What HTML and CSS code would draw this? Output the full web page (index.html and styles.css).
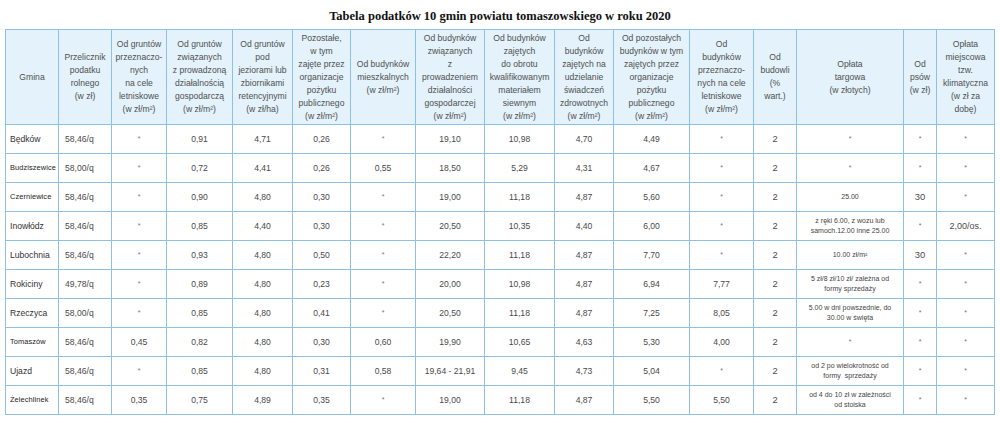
FILE: index.html
```html
<!DOCTYPE html>
<html lang="pl">
<head>
<meta charset="utf-8">
<title>Tabela podatków</title>
<link rel="stylesheet" href="styles.css">
</head>
<body>
<h1 class="title">Tabela podatków 10 gmin powiatu tomaszowskiego w roku 2020</h1>
<table class="tax">
<colgroup>
<col style="width:53px"><col style="width:53px"><col style="width:55px"><col style="width:66px"><col style="width:60px"><col style="width:58px"><col style="width:65px"><col style="width:69px"><col style="width:70px"><col style="width:59px"><col style="width:76px"><col style="width:64px"><col style="width:43px"><col style="width:107px"><col style="width:33px"><col style="width:58px">
</colgroup>
<thead>
<tr>
<th>Gmina</th>
<th>Przelicznik<br>podatku<br>rolnego<br>(w zł)</th>
<th>Od gruntów<br>przeznaczo-<br>nych<br>na cele<br>letniskowe<br>(w zł/m²)</th>
<th>Od gruntów<br>związanych<br>z prowadzoną<br>działalnością<br>gospodarczą<br>(w zł/m²)</th>
<th>Od gruntów<br>pod<br>jeziorami lub<br>zbiornikami<br>retencyjnymi<br>(w zł/ha)</th>
<th>Pozostałe,<br>w tym<br>zajęte przez<br>organizacje<br>pożytku<br>publicznego<br>(w zł/m²)</th>
<th>Od budynków<br>mieszkalnych<br>(w zł/m²)</th>
<th>Od budynków<br>związanych<br>z<br>prowadzeniem<br>działalności<br>gospodarczej<br>(w zł/m²)</th>
<th>Od budynków<br>zajętych<br>do obrotu<br>kwalifikowanym<br>materiałem<br>siewnym<br>(w zł/m²)</th>
<th>Od<br>budynków<br>zajętych na<br>udzielanie<br>świadczeń<br>zdrowotnych<br>(w zł/m²)</th>
<th>Od pozostałych<br>budynków w tym<br>zajętych przez<br>organizacje<br>pożytku<br>publicznego<br>(w zł/m²)</th>
<th>Od<br>budynków<br>przeznaczo-<br>nych na cele<br>letniskowe<br>(w zł/m²)</th>
<th>Od<br>budowli<br>(%<br>wart.)</th>
<th>Opłata<br>targowa<br>(w złotych)</th>
<th>Od<br>psów<br>(w zł)</th>
<th>Opłata<br>miejscowa<br>tzw.<br>klimatyczna<br>(w zł za<br>dobę)</th>
</tr>
</thead>
<tbody>
<tr><td class="name">Będków</td><td class="conv">58,46/q</td><td class="star">*</td><td>0,91</td><td>4,71</td><td>0,26</td><td class="star">*</td><td>19,10</td><td>10,98</td><td>4,70</td><td>4,49</td><td class="star">*</td><td class="big">2</td><td class="star">*</td><td class="star">*</td><td class="star">*</td></tr>
<tr><td class="name small">Budziszewice</td><td class="conv">58,00/q</td><td class="star">*</td><td>0,72</td><td>4,41</td><td>0,26</td><td>0,55</td><td>18,50</td><td>5,29</td><td>4,31</td><td>4,67</td><td class="star">*</td><td class="big">2</td><td class="star">*</td><td class="star">*</td><td class="star">*</td></tr>
<tr><td class="name small">Czerniewice</td><td class="conv">58,46/q</td><td class="star">*</td><td>0,90</td><td>4,80</td><td>0,30</td><td class="star">*</td><td>19,00</td><td>11,18</td><td>4,87</td><td>5,60</td><td class="star">*</td><td class="big">2</td><td class="note">25.00</td><td class="big">30</td><td class="star">*</td></tr>
<tr><td class="name">Inowłódz</td><td class="conv">58,46/q</td><td class="star">*</td><td>0,85</td><td>4,40</td><td>0,30</td><td class="star">*</td><td>20,50</td><td>10,35</td><td>4,40</td><td>6,00</td><td class="star">*</td><td class="big">2</td><td class="note">z ręki 6.00, z wozu lub<br>samoch.12.00 inne 25.00</td><td class="star">*</td><td class="mid">2,00/os.</td></tr>
<tr><td class="name">Lubochnia</td><td class="conv">58,46/q</td><td class="star">*</td><td>0,93</td><td>4,80</td><td>0,50</td><td class="star">*</td><td>22,20</td><td>11,18</td><td>4,87</td><td>7,70</td><td class="star">*</td><td class="big">2</td><td class="note">10.00 zł/m²</td><td class="big">30</td><td class="star">*</td></tr>
<tr><td class="name">Rokiciny</td><td class="conv">49,78/q</td><td class="star">*</td><td>0,89</td><td>4,80</td><td>0,23</td><td class="star">*</td><td>20,00</td><td>10,98</td><td>4,87</td><td>6,94</td><td>7,77</td><td class="big">2</td><td class="note">5 zł/8 zł/10 zł/ zależna od<br>formy sprzedaży</td><td class="star">*</td><td class="star">*</td></tr>
<tr><td class="name">Rzeczyca</td><td class="conv">58,00/q</td><td class="star">*</td><td>0,85</td><td>4,80</td><td>0,41</td><td class="star">*</td><td>20,50</td><td>11,18</td><td>4,87</td><td>7,25</td><td>8,05</td><td class="big">2</td><td class="note">5.00 w dni powszednie, do<br>30.00 w święta</td><td class="star">*</td><td class="star">*</td></tr>
<tr><td class="name small">Tomaszów</td><td class="conv">58,46/q</td><td>0,45</td><td>0,82</td><td>4,80</td><td>0,30</td><td>0,60</td><td>19,90</td><td>10,65</td><td>4,63</td><td>5,30</td><td>4,00</td><td class="big">2</td><td class="star">*</td><td class="star">*</td><td class="star">*</td></tr>
<tr><td class="name">Ujazd</td><td class="conv">58,46/q</td><td class="star">*</td><td>0,85</td><td>4,80</td><td>0,31</td><td>0,58</td><td>19,64 - 21,91</td><td>9,45</td><td>4,73</td><td>5,04</td><td class="star">*</td><td class="big">2</td><td class="note">od 2 po wielokrotność od<br>formy&nbsp; sprzedaży</td><td class="star">*</td><td class="star">*</td></tr>
<tr><td class="name small">Żelechlinek</td><td class="conv">58,46/q</td><td>0,35</td><td>0,75</td><td>4,89</td><td>0,35</td><td class="star">*</td><td>19,00</td><td>11,18</td><td>4,87</td><td>5,50</td><td>5,50</td><td class="big">2</td><td class="note">od 4 do 10 zł w zależności<br>od stoiska</td><td class="star">*</td><td class="star">*</td></tr>
</tbody>
</table>
</body>
</html>
```
FILE: styles.css
```css
html, body {
  margin: 0;
  padding: 0;
  background: #ffffff;
}

.title {
  margin: 0;
  height: 29px;
  line-height: 32px;
  text-align: center;
  font-family: "Liberation Serif", "Times New Roman", serif;
  font-weight: bold;
  font-size: 12.5px;
  color: #111;
}

.tax {
  margin-left: 5px;
  width: 989px;
  table-layout: fixed;
  border-collapse: collapse;
  font-family: "Liberation Sans", Arial, sans-serif;
  color: #4a4a4a;
}

.tax th,
.tax td {
  border: 1px solid #8ec0e4;
  padding: 0;
  text-align: center;
  vertical-align: middle;
  overflow: hidden;
  white-space: nowrap;
}

.tax th {
  height: 94px;
  background: #e3f2fb;
  font-weight: normal;
  font-size: 8.6px;
  line-height: 13px;
  color: #505050;
}

.tax td {
  height: 28px;
  font-size: 8.6px;
  line-height: 10px;
}

.tax td.name {
  text-align: left;
  padding-left: 4px;
  color: #333;
}

.tax td.name.small {
  font-size: 7.4px;
  letter-spacing: 0.1px;
  color: #222;
}

.tax td.conv {
  text-align: left;
  padding-left: 6px;
}

.tax td.star {
  font-size: 7px;
  color: #777;
}

.tax td.big {
  font-size: 9.4px;
}

.tax td.mid {
  font-size: 9px;
}

.tax td.note {
  font-size: 7px;
  line-height: 10px;
  color: #444;
}
```
